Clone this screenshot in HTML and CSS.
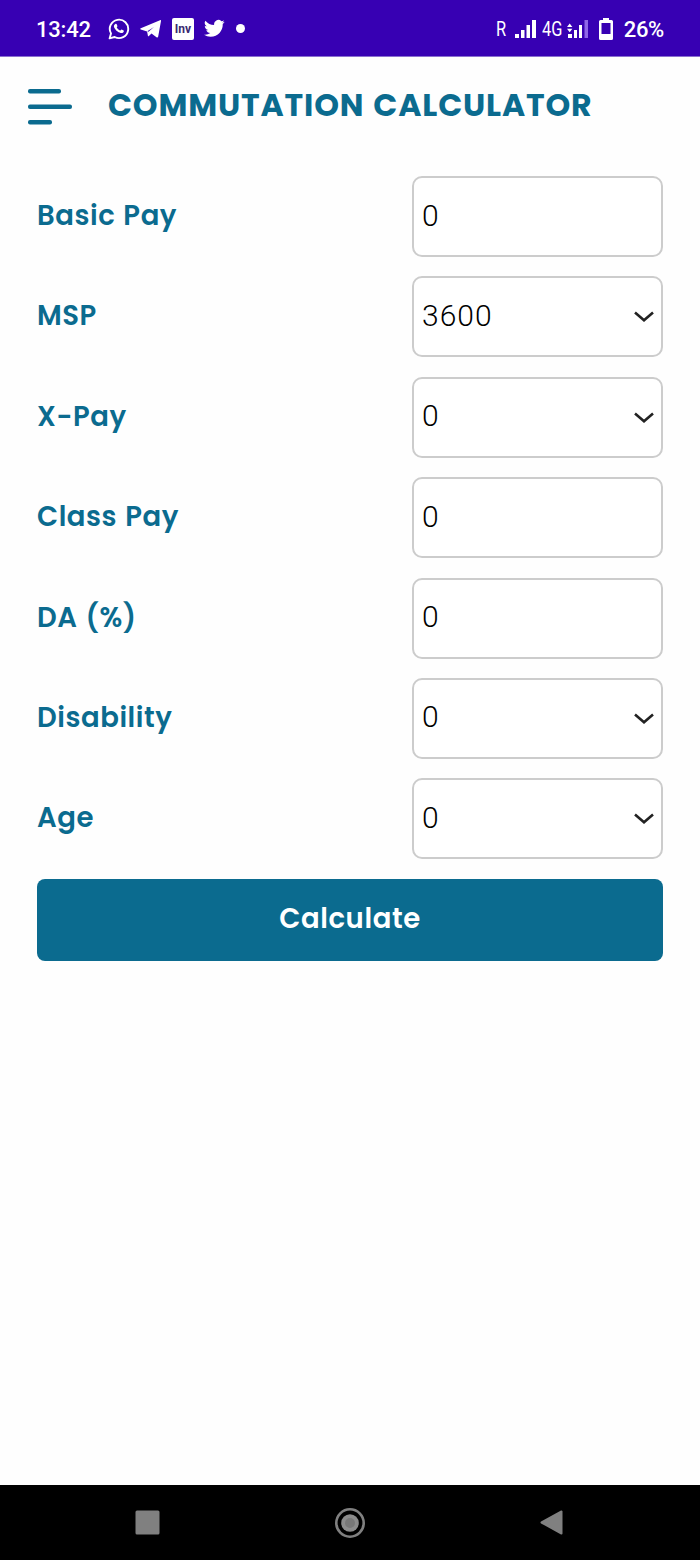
FILE: index.html
```html
<!DOCTYPE html>
<html lang="en">
<head>
  <meta charset="UTF-8" />
  <meta name="viewport" content="width=device-width, initial-scale=1.0" />
  <title>Commutation Calculator</title>
  <link rel="stylesheet" href="styles.css">
</head>
<body>
  <div class="status-bar">
    <span class="time">13:42</span>
    <div class="status-icons">
      <svg width="22" height="22" viewBox="0 0 22 22" fill="none" stroke="#fff">
        <path d="M1.6 20.4l1.4-5A9.2 9.2 0 1 1 6.700 19z" stroke-width="1.9" stroke-linejoin="round"/>
        <path d="M7.300 6c.7-.5 1.300-.2 1.500.4l.6 1.500c.2.500-.8 1.200-.6 1.600.8 1.400 1.900 2.300 3.200 2.900.500.200 1.100-1.200 1.600-1l2 1c.6.300.100 1.900-.8 2.400-1.200.7-3.100.2-5.200-1.200-1.900-1.400-3.500-3.500-3.700-5.100-.1-1 .6-2 1.400-2.500z" fill="#fff" stroke="none"/>
      </svg>
      <svg width="22" height="20" viewBox="0 0 22 20" fill="#fff">
        <path d="M.8 9.300L20 1.200c.8-.3 1.200.1 1 .9l-2.800 15.500c-.2 1-.9 1.200-1.700.7l-5-3.700-2.600 2.500c-.5.5-.9.2-1-.4l-.8-4.200L.8 10.600c-.7-.3-.7-.9 0-1.300z"/>
        <path d="M7.300 12.200L14 8 8.500 12.800z" fill="#3700b3"/>
      </svg>
      <span class="inv-icon">Inv</span>
      <svg width="21" height="19" viewBox="0 0 24 20" fill="#fff">
        <path d="M23.6 2.400a9.600 9.600 0 0 1-2.800.8A4.900 4.900 0 0 0 23 .5a9.700 9.700 0 0 1-3.100 1.200 4.900 4.900 0 0 0-8.300 4.400A13.800 13.800 0 0 1 1.600 1a4.900 4.900 0 0 0 1.500 6.500 4.800 4.800 0 0 1-2.200-.6 4.900 4.900 0 0 0 3.900 4.800 4.900 4.900 0 0 1-2.200.1 4.900 4.900 0 0 0 4.600 3.400A9.800 9.800 0 0 1 0 17.200a13.800 13.800 0 0 0 7.500 2.200c9.100 0 14.300-7.700 13.900-14.500a10 10 0 0 0 2.200-2.500z"/>
      </svg>
      <span class="dot"></span>
    </div>
    <div class="status-right">
      <span class="net">R</span>
      <svg class="signal" width="21" height="18" viewBox="0 0 21 18" fill="#fff">
        <rect x="0" y="14" width="4" height="4"/>
        <rect x="6" y="10" width="3.500" height="8"/>
        <rect x="11.500" y="5" width="3.500" height="13"/>
        <rect x="17" y="0" width="4" height="18"/>
      </svg>
      <span class="net net-4g">4G</span>
      <svg class="signal-2" width="21" height="18" viewBox="0 0 21 18" fill="#fff">
        <path d="M0 7l2.700-3.500L5.400 7zM0 8.800h5.400l-2.700 3.400z"/>
        <rect x="1" y="14" width="4" height="4"/>
        <rect x="7" y="10" width="3" height="8"/>
        <rect x="12" y="5" width="3" height="13"/>
        <rect x="17.500" y="0" width="3.500" height="18" fill="#8f66e8"/>
      </svg>
      <svg class="battery" width="14" height="22" viewBox="0 0 14 22">
        <path d="M4 0h6v2h2.500Q14 2 14 3.500v17q0 1.500-1.500 1.500h-11Q0 22 0 20.500v-17Q0 2 1.500 2H4z" fill="#fff"/>
        <path d="M2.500 5h9v11h-9z" fill="#3700b3"/>
      </svg>
      <span class="percent">26%</span>
    </div>
  </div>

  <header class="header">
    <svg width="44" height="36" viewBox="0 0 44 36" fill="#0b6b8f">
      <rect x="0" y="0" width="33" height="4.400" rx="2"/>
      <rect x="0" y="15.500" width="44" height="4.400" rx="2"/>
      <rect x="0" y="31" width="24" height="4.400" rx="2"/>
    </svg>
    <h1>COMMUTATION CALCULATOR</h1>
  </header>

  <form class="calc-form" onsubmit="return false">
    <div class="form-row">
      <label for="basicPay">Basic Pay</label>
      <input type="text" id="basicPay" value="0" />
    </div>
    <div class="form-row">
      <label for="msp">MSP</label>
      <div class="select-box">
        <select id="msp"><option>3600</option></select>
        <svg width="20" height="12" viewBox="0 0 20 12"><path d="M1 1.500l9 7.700 9-7.700"/></svg>
      </div>
    </div>
    <div class="form-row">
      <label for="xPay">X-Pay</label>
      <div class="select-box">
        <select id="xPay"><option>0</option></select>
        <svg width="20" height="12" viewBox="0 0 20 12"><path d="M1 1.500l9 7.700 9-7.700"/></svg>
      </div>
    </div>
    <div class="form-row">
      <label for="classPay">Class Pay</label>
      <input type="text" id="classPay" value="0" />
    </div>
    <div class="form-row">
      <label for="da">DA (%)</label>
      <input type="text" id="da" value="0" />
    </div>
    <div class="form-row">
      <label for="disability">Disability</label>
      <div class="select-box">
        <select id="disability"><option>0</option></select>
        <svg width="20" height="12" viewBox="0 0 20 12"><path d="M1 1.500l9 7.700 9-7.700"/></svg>
      </div>
    </div>
    <div class="form-row">
      <label for="age">Age</label>
      <div class="select-box">
        <select id="age"><option>0</option></select>
        <svg width="20" height="12" viewBox="0 0 20 12"><path d="M1 1.500l9 7.700 9-7.700"/></svg>
      </div>
    </div>
    <button type="submit" class="btn">Calculate</button>
  </form>

  <nav class="nav-bar">
    <svg width="25" height="25" viewBox="0 0 25 25"><rect x=".5" y=".5" width="24" height="24" rx="1.500" fill="#808080"/></svg>
    <svg width="30" height="30" viewBox="0 0 30 30">
      <circle cx="15" cy="15" r="13.700" fill="none" stroke="#808080" stroke-width="2.600"/>
      <circle cx="15" cy="15" r="8.800" fill="#8c8c8c"/>
      <circle cx="15" cy="15" r="5" fill="#787878"/>
    </svg>
    <svg width="23" height="25" viewBox="0 0 23 25"><path d="M1.500 12.500L21.500 1.500v22z" fill="#808080" stroke="#808080" stroke-width="2" stroke-linejoin="round"/></svg>
  </nav>
</body>
</html>
```
FILE: styles.css
```css
* {
    margin: 0;
    padding: 0;
    box-sizing: border-box;
}

body {
    font-family: 'Poppins', 'Inter', sans-serif;
    background: #fefefe;
    color: #0b6b8f;
    height: 1560px;
    display: flex;
    flex-direction: column;
    overflow: hidden;
}

.status-bar {
    height: 57px;
    flex-shrink: 0;
    background: #3700b3;
    border-bottom: 1px solid #8a6fd0;
    color: #ffffff;
    font-family: 'Roboto', sans-serif;
    display: flex;
    align-items: center;
    padding: 1px 36px 0;
}

.time, .percent {
    font-size: 22px;
    font-weight: 500;
    padding-top: 1px;
}

.time {
    letter-spacing: -0.2px;
}

.status-icons {
    display: flex;
    align-items: center;
    gap: 10px;
    margin-left: 17px;
}

.inv-icon {
    width: 22px;
    height: 22px;
    border-radius: 2px;
    background: #ffffff;
    color: #3a2a70;
    font-size: 12px;
    font-weight: 700;
    line-height: 22px;
    text-align: center;
}

.dot {
    width: 9px;
    height: 9px;
    border-radius: 50%;
    background: #ffffff;
    margin-left: 1px;
}

.status-right {
    display: flex;
    align-items: center;
    margin-left: auto;
}

.net {
    font-size: 20px;
    display: inline-block;
    width: 19px;
    transform: scaleX(0.82);
    transform-origin: left;
}

.net-4g {
    width: 25px;
    margin-left: 6px;
}

.battery {
    margin: 0 11px;
}

.percent {
    letter-spacing: -0.3px;
}

.header {
    display: flex;
    align-items: center;
    gap: 36px;
    height: 98px;
    padding: 2px 0 0 28px;
}

h1 {
    font-size: 31.5px;
    font-weight: 700;
    line-height: 40px;
    letter-spacing: 0.85px;
    word-spacing: 1.5px;
    white-space: nowrap;
    padding-bottom: 5px;
}

.calc-form {
    flex: 1;
    padding: 21px 37px 0;
}

.form-row {
    display: flex;
    justify-content: space-between;
    height: 81px;
    margin-bottom: 19.4px;
}

label {
    font-size: 27.5px;
    font-weight: 600;
    line-height: 79px;
    letter-spacing: 0.55px;
    word-spacing: 1px;
    white-space: nowrap;
}

input, select {
    width: 251px;
    height: 81px;
    border: 2px solid #cccccc;
    border-radius: 10px;
    background: #ffffff;
    color: #000000;
    font-family: 'Roboto', sans-serif;
    font-size: 30px;
    font-weight: 300;
    letter-spacing: 1px;
    padding: 0 8px 3px;
    outline: none;
    appearance: none;
}

/* select and its arrow share one grid cell */
.select-box {
    display: grid;
    align-items: center;
}

.select-box select, .select-box svg {
    grid-area: 1 / 1;
}

.select-box svg {
    justify-self: end;
    margin: 1px 9px 0 0;
    fill: none;
    stroke: #222222;
    stroke-width: 2.6;
    pointer-events: none;
}

.btn {
    display: block;
    width: 100%;
    height: 82px;
    border: none;
    border-radius: 8px;
    background: #0b6b8f;
    color: #ffffff;
    font-family: inherit;
    font-size: 27.5px;
    font-weight: 600;
    letter-spacing: 0.6px;
    padding-bottom: 1px;
    cursor: pointer;
}

.nav-bar {
    height: 75px;
    flex-shrink: 0;
    background: #000000;
    display: flex;
    align-items: center;
    justify-content: space-between;
    padding: 0 137px 0 135px;
}
```
